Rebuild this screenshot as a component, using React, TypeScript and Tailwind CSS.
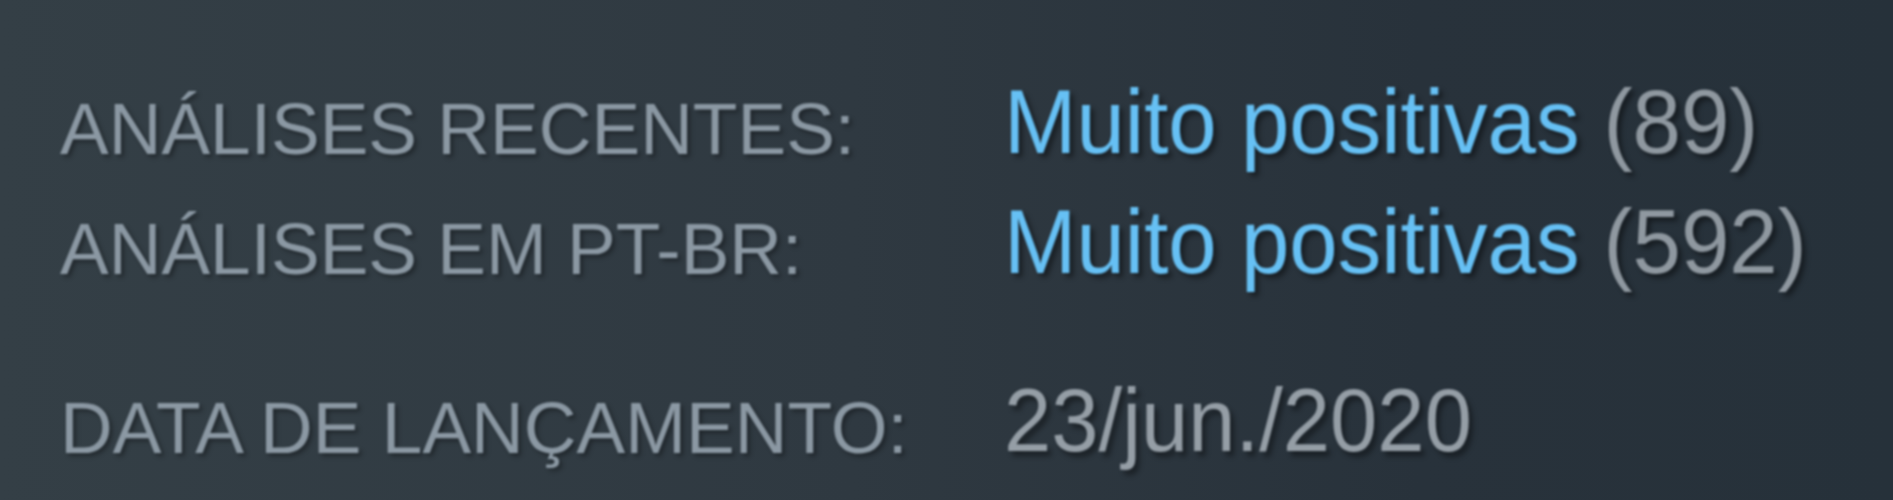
import React from "react";

export default function App() {
  const font = { fontFamily: '"Liberation Sans", Arial, sans-serif' };
  return (
    <div
      className="w-[1893px] h-[500px] overflow-hidden bg-[linear-gradient(90deg,#343f46_0%,#2f3941_45%,#28323b_75%,#26313a_100%)]"
      style={font}
    >
      <div className="pt-[64px] pl-[60px] blur-[0.8px]">
        <div className="flex items-baseline h-[120px] leading-[120px]">
          <div className="w-[944px] text-[73px] text-[#8b98a3] uppercase [text-shadow:3px_3px_4px_rgba(0,0,0,0.35)]">
            ANÁLISES RECENTES:
          </div>
          <div className="inline-block origin-bottom scale-y-[1.04] text-[87px] [text-shadow:4px_4px_5px_rgba(0,0,0,0.45)]">
            <span className="text-[#66c0f4]">Muito positivas</span>
            <span className="text-[#8f98a0]"> (89)</span>
          </div>
        </div>
        <div className="flex items-baseline h-[120px] leading-[120px]">
          <div className="w-[944px] text-[73px] text-[#8b98a3] uppercase [text-shadow:3px_3px_4px_rgba(0,0,0,0.35)]">
            ANÁLISES EM PT-BR:
          </div>
          <div className="inline-block origin-bottom scale-y-[1.04] text-[87px] [text-shadow:4px_4px_5px_rgba(0,0,0,0.45)]">
            <span className="text-[#66c0f4]">Muito positivas</span>
            <span className="text-[#8f98a0]"> (592)</span>
          </div>
        </div>
        <div className="flex items-baseline h-[120px] leading-[120px] mt-[60px]">
          <div className="w-[944px] text-[73px] text-[#8b98a3] uppercase [text-shadow:3px_3px_4px_rgba(0,0,0,0.35)]">
            DATA DE LANÇAMENTO:
          </div>
          <div className="inline-block origin-bottom scale-y-[1.05] text-[85px] text-[#959ea6] [text-shadow:4px_4px_5px_rgba(0,0,0,0.4)]">
            23/jun./2020
          </div>
        </div>
      </div>
    </div>
  );
}
